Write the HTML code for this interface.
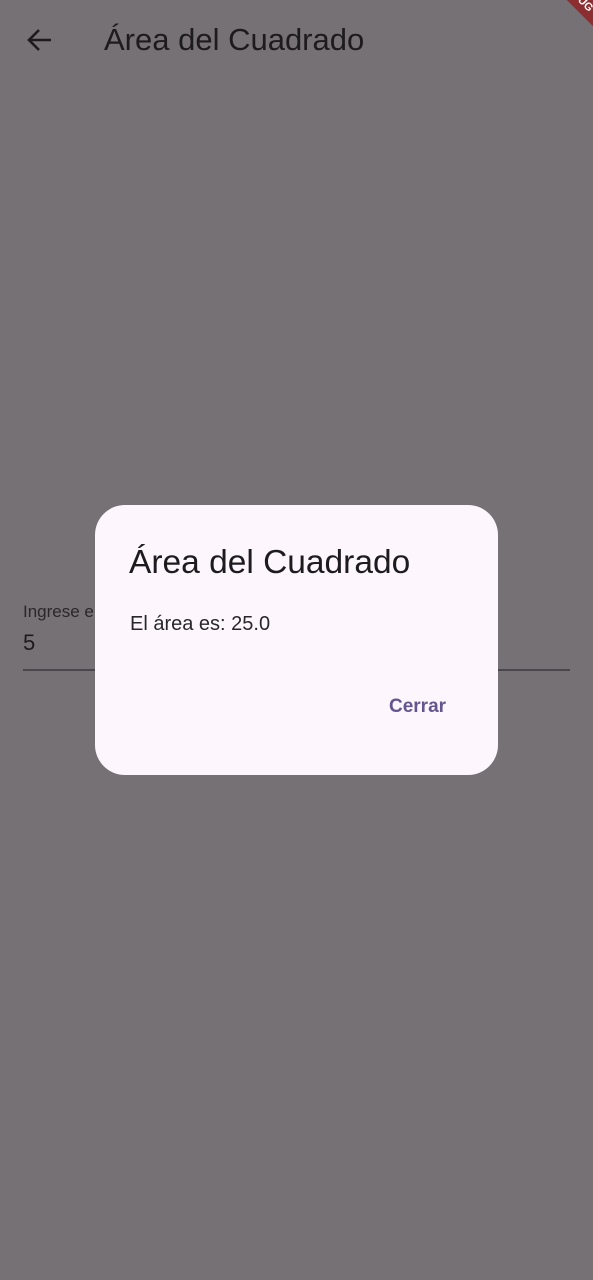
<!DOCTYPE html>
<html><head><meta charset="utf-8"><style>
body{margin:0;width:593px;height:1280px;background:#767175;position:relative;overflow:hidden;font-family:"Liberation Sans",sans-serif;}
.t{position:absolute;white-space:nowrap;}
</style></head><body>
<svg style="position:absolute;left:26px;top:27px" width="28" height="26" viewBox="0 0 28 26"><path d="M25 13H4M13 3L3 13l10 10" fill="none" stroke="#1d1b1e" stroke-width="2.6"/></svg>
<div class="t" style="left:104px;top:22px;font-size:31px;color:#1d1b1e">Área del Cuadrado</div>
<div style="position:absolute;right:-44px;top:-14px;width:120px;height:20px;background:#8b2e31;transform:rotate(45deg);color:#fff;font-size:11px;font-weight:bold;text-align:center;line-height:20px;transform-origin:center">DEBUG</div>
<div class="t" style="left:23px;top:602px;font-size:17px;color:#2a272b">Ingrese e</div>
<div class="t" style="left:23px;top:630px;font-size:22px;color:#1d1b1e">5</div>
<div style="position:absolute;left:23px;top:669px;width:547px;height:2px;background:#4a464b"></div>
<div style="position:absolute;left:95px;top:505px;width:403px;height:270px;background:#fdf7fd;border-radius:30px"></div>
<div class="t" style="left:129px;top:544px;font-size:33.5px;color:#1d1b1e">Área del Cuadrado</div>
<div class="t" style="left:130px;top:613px;font-size:20px;color:#2a272b">El área es: 25.0</div>
<div class="t" style="left:389px;top:696px;font-size:19px;color:#65558f;font-weight:bold">Cerrar</div>
</body></html>
